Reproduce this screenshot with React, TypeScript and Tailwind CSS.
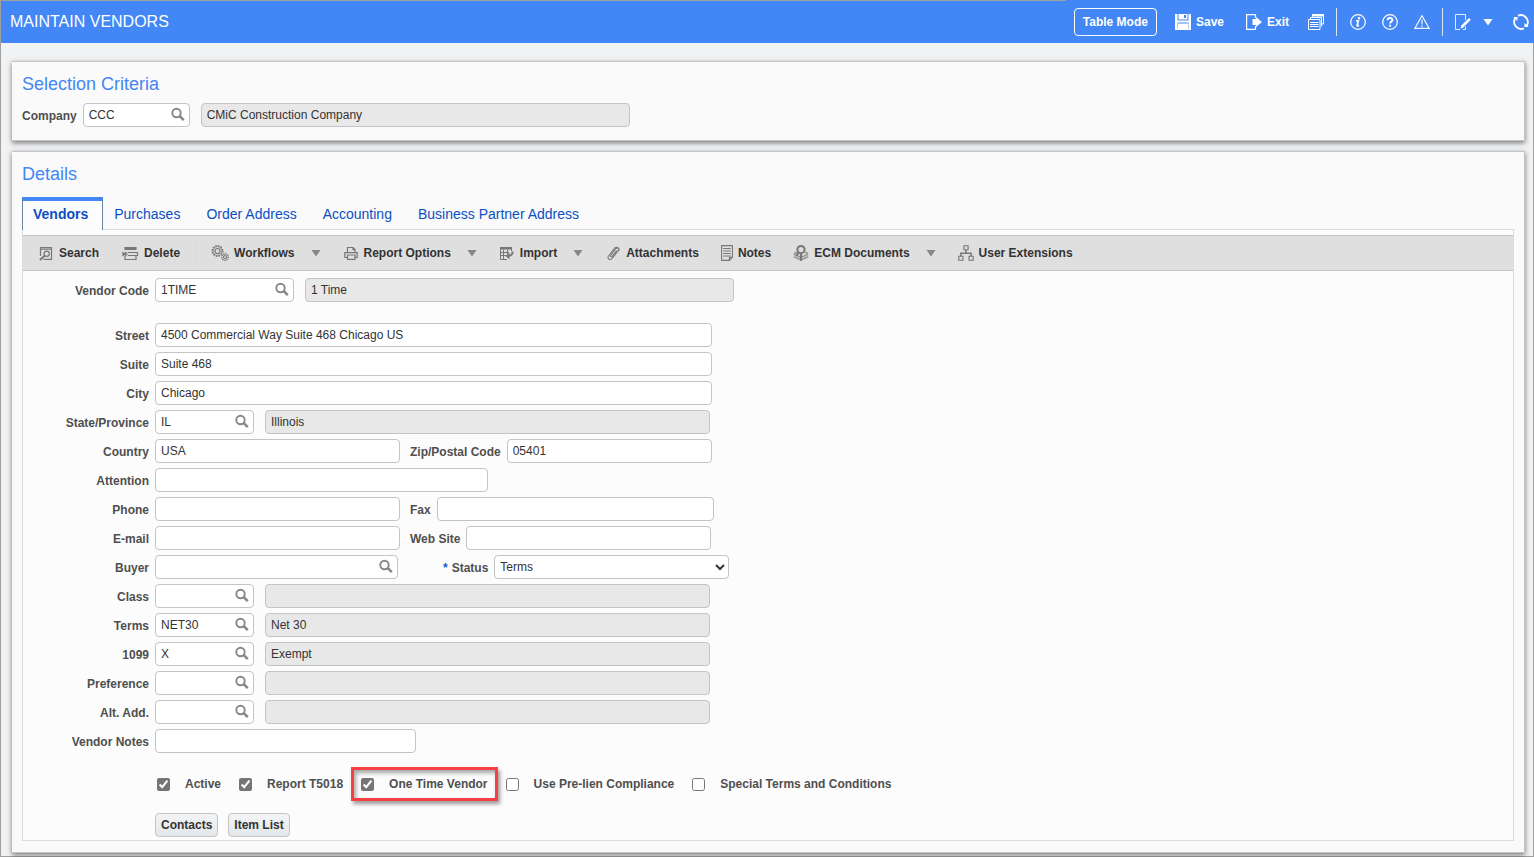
import React, { useId, type ReactNode } from 'react';

type IconProps = { w?: number; h?: number; children: ReactNode; sw?: number };

function Icon({ w = 16, h = 16, sw = 1.2, children }: IconProps) {
  return (
    <svg
      width={w}
      height={h}
      viewBox={`0 0 ${w} ${h}`}
      fill="none"
      stroke="currentColor"
      strokeWidth={sw}
      className="shrink-0"
      aria-hidden="true"
    >
      {children}
    </svg>
  );
}

const Caret = () => (
  <Icon w={10} h={8}>
    <path d="M.5 1h9L5 7.5z" fill="currentColor" stroke="none" />
  </Icon>
);

const SaveIcon = () => (
  <Icon>
    <path d="M0 0h2.500v6.500h11V0H16v16H0z" fill="currentColor" stroke="none" />
    <path d="M3.500 0h9v5.500h-9z" fill="currentColor" stroke="none" />
    <path d="M9 1h2v3H9z" fill="#4287f5" stroke="none" />
    <path d="M2.500 9h11" stroke="#4287f5" strokeWidth="1" />
    <path d="M2.500 9v6M13.500 9v6" stroke="#4287f5" strokeWidth=".4" />
  </Icon>
);

const ExitIcon = () => (
  <Icon>
    <path d="M9.500 4V.6H.6v14.800h8.900V12" />
    <path d="M6.500 5H10V3l6 5-6 5v-2H6.500z" fill="currentColor" stroke="none" />
  </Icon>
);

const FormsIcon = () => (
  <Icon sw={1}>
    <path d="M4.500 2.500V.5h11v9.500h-1.500" />
    <path d="M4 .5h12v2H4z" fill="currentColor" stroke="none" />
    <path d="M2.500 5V3.500h11v8.500h-1" />
    <path d="M.5 5.500h11.500v10H.5z" />
    <path d="M2 8.500h8.500M2 10.500h8.500M2 12.500h8.500" />
  </Icon>
);

const InfoIcon = () => (
  <Icon>
    <circle cx="8" cy="8" r="7.300" />
    <path d="M6 6.900h2.300L7.100 11.600h2" strokeWidth="1.700" />
    <circle cx="9" cy="4.200" r="1.200" fill="currentColor" stroke="none" />
  </Icon>
);

const HelpIcon = () => (
  <Icon>
    <circle cx="8" cy="8" r="7.300" />
    <path d="M5.600 6.300c0-3.100 4.900-3 4.900-.3 0 1.600-2.400 1.700-2.400 3.500" strokeWidth="1.900" />
    <path d="M7 10.700h2.100v1.900H7z" fill="currentColor" stroke="none" />
  </Icon>
);

const WarnIcon = () => (
  <Icon sw={1.1}>
    <path d="M8 1.700 15.200 14.400H.8z" />
    <path d="M8 5.500v5M8 11.500v1.500" />
  </Icon>
);

const EditIcon = () => (
  <Icon sw={1}>
    <path d="M10.500 6V.5H.5v15h4.500M10.500 12.500v3H8" strokeOpacity=".85" />
    <path d="m5.500 14.800.8-3.300L14 4l1.800 1.700-7.500 7.800z" fill="currentColor" stroke="none" />
  </Icon>
);

const RefreshIcon = () => (
  <Icon sw={1.8}>
    <path d="M5 1.700a7 7 0 0 1 8.600 10.300M11 14.300A7 7 0 0 1 2.400 4" />
    <path d="M.3 3h4.200v4zM15.700 13h-4.200V9z" fill="currentColor" stroke="none" />
  </Icon>
);

const SearchDocIcon = () => (
  <Icon>
    <path d="M2.500 11V2.500h11v11.900H5.500M2.500 4.200h11" />
    <circle cx="8.700" cy="8.700" r="2.600" />
    <path d="m6.700 10.800-4.900 4.200" strokeWidth="1.800" />
  </Icon>
);

const DeleteIcon = () => (
  <Icon w={18}>
    <path d="M4 2.500h11v2H4z" fill="currentColor" />
    <path d="M7 7.500h9.500v3H7M4 11v3.500h11v-3.500" />
    <path d="m1.500 7 4 4M5.500 7l-4 4M1 9h6" />
  </Icon>
);

const GearsIcon = () => (
  <Icon w={18}>
    <circle cx="6.500" cy="6" r="5.200" strokeDasharray="1.600 1.100" strokeWidth="1.500" />
    <circle cx="6.500" cy="6" r="4.400" strokeWidth=".8" />
    <circle cx="6.500" cy="6" r="2.500" />
    <circle cx="14" cy="12" r="3.300" strokeDasharray="1.400 .8" strokeWidth="1.400" />
    <circle cx="14" cy="12" r="1.500" />
  </Icon>
);

const PrinterIcon = () => (
  <Icon>
    <path d="M4.500 7V2.500h5.500l2 2V7M4 12.500H1.800V7.600h12.400v4.900H12" />
    <path d="M4.500 10h7.500v4.400H4.500zM10 2.500v2.200h2" />
  </Icon>
);

const ImportIcon = () => (
  <Icon>
    <path d="M1 2h12v2.500H1z" fill="currentColor" stroke="none" />
    <path d="M1.500 2v12.500H8M12.500 2v4M1 7.500h9M1 10.500h6M4.500 4.500v10M8.500 4.500v5" strokeWidth="1" />
    <path d="M13.500 6.500c.3 3-1.500 4-3.500 4.200" strokeWidth="2" />
    <path d="M10.500 7.700 6.500 11l4 3.300z" fill="currentColor" stroke="none" />
  </Icon>
);

const ClipIcon = () => (
  <Icon>
    <g transform="translate(1.500)">
      <path d="M4 10.500 9.300 3.600c1.300-1.700 3.800 0 2.600 1.700l-6.300 8.200c-2 2.300-5.300.1-3.700-2.300L7.700 3.500c1.700-2.600 6-.7 4.500 2.300M4.200 10.200c-.9 1.300.7 2.200 1.500 1.200l4.500-5.900" strokeWidth="1.100" />
    </g>
  </Icon>
);

const NotesIcon = () => (
  <Icon w={12} sw={1.1}>
    <path d="M.6.6h10.800v11.600l-3 3.200H.6zM8.400 15.200v-3h3" />
    <path d="M2.200 3.500h7.500M2.200 6h7.500M2.200 8.500h7.500M2.200 11h7.500" />
  </Icon>
);

const EcmIcon = () => (
  <Icon>
    <path d="m.8 9.200 7.200 3.300 7.200-3.300M.8 11.700 8 15l7.200-3.300M1 8.500 4 7.300M15 8.500l-3-1.200" strokeWidth="1.500" strokeOpacity=".7" />
    <path d="M8 9v6.800" strokeWidth="2.200" />
    <circle cx="8" cy="4.600" r="3.600" strokeWidth="2" />
    <path d="M5.500 7.500 3.500 11" strokeWidth="2" />
  </Icon>
);

const OrgIcon = () => (
  <Icon sw={1.1}>
    <path d="M5.900.8h4.200v3.900H5.900zM.8 11.300h4.200v3.900H.8zM11 11.300h4.200v3.900H11z" />
    <path d="M8 4.700v3.500M2.900 11.300V8.200h10.200v3.100" strokeWidth="1.500" />
  </Icon>
);

function HeaderButton({ label, text, children }: { label: string; text?: string; children: ReactNode }) {
  return (
    <button type="button" aria-label={label} className="flex h-7 items-center gap-[5px] text-xs font-bold">
      {children}
      {text}
    </button>
  );
}

function ToolItem({ icon, text, menu }: { icon: ReactNode; text: string; menu?: boolean }) {
  return (
    <div className="flex items-center gap-4">
      <button type="button" className="flex items-center gap-[5px] text-xs font-bold text-[#333]">
        <span className="text-[#777]">{icon}</span>
        {text}
      </button>
      {menu && (
        <button type="button" aria-label={`${text} menu`} className="text-[#84888c]">
          <Caret />
        </button>
      )}
    </div>
  );
}

const fieldClass =
  'h-6 w-full rounded-[4px] border border-[#c4c4c4] bg-white px-[5px] text-xs text-[#333] outline-none focus:border-[#4287f5]';

function Field({
  id,
  width,
  value = '',
  lookup,
}: {
  id?: string;
  width: string;
  value?: string;
  lookup?: boolean;
}) {
  return (
    <div className={`relative flex ${width}`}>
      <input id={id} defaultValue={value} className={fieldClass} />
      {lookup && (
        <button type="button" aria-label="Look up" className="absolute top-1 right-1 text-[#84888c]">
          <Icon>
            <circle cx="6.500" cy="6" r="4.200" strokeWidth="1.900" />
            <path d="m9.600 9 4.200 4.200" strokeWidth="2.500" />
          </Icon>
        </button>
      )}
    </div>
  );
}

function Description({ width, value = '', label }: { width: string; value?: string; label: string }) {
  return (
    <input
      readOnly
      aria-label={label}
      value={value}
      className={`ml-[11px] h-6 rounded-[4px] border border-[#c4c4c4] bg-[#e8e8e8] px-[5px] text-xs text-[#333] outline-none ${width}`}
    />
  );
}

const captionClass = 'text-xs font-bold text-[#4f4f4f] whitespace-nowrap';
const labelClass = `${captionClass} pt-0.5`;

function Row({
  label,
  width,
  value,
  lookup,
  children,
}: {
  label: string;
  width: string;
  value?: string;
  lookup?: boolean;
  children?: ReactNode;
}) {
  const id = useId();
  return (
    <div className="flex items-center">
      <label htmlFor={id} className={`${labelClass} mr-1.5 w-[126px] text-right`}>
        {label}
      </label>
      <Field id={id} width={width} value={value} lookup={lookup} />
      {children}
    </div>
  );
}

function SideField({ label, width, value }: { label: string; width: string; value?: string }) {
  const id = useId();
  return (
    <>
      <label htmlFor={id} className={`${labelClass} mr-1.5 ml-2.5`}>
        {label}
      </label>
      <Field id={id} width={width} value={value} />
    </>
  );
}

function Check({ label, checked, highlight }: { label: string; checked?: boolean; highlight?: boolean }) {
  return (
    <label className={`relative flex h-5 items-center gap-[15px] ${captionClass}`}>
      <input type="checkbox" defaultChecked={checked} className="size-[13px] accent-[#757575]" />
      {label}
      {highlight && (
        <span className="pointer-events-none absolute -inset-x-2.5 -inset-y-[7px] border-3 border-[#f93f43] shadow-[2px_3px_4px_rgba(0,0,0,0.4),inset_2px_3px_4px_rgba(0,0,0,0.35)]" />
      )}
    </label>
  );
}

const panelClass =
  'mr-2 ml-[11px] border-y border-r border-[#c4c4c4] bg-[#fafafa] px-2.5 pt-2.5 shadow-[0_2px_5px_rgba(0,0,0,0.5)]';

const smallButton =
  'h-6 rounded-[4px] border border-[#c4c4c4] bg-linear-to-b from-[#f3f4f5] to-[#e3e7ea] px-[5px] text-xs font-bold text-[#333]';

export default function App() {
  return (
    <div className="flex min-h-screen flex-col border border-[#a0a0a0] bg-[#f1f2f4] font-['Liberation_Sans',Arial,sans-serif]">
      <header className="-mr-px flex h-[42px] items-center bg-[#4287f5] pl-[9px] text-white">
        <h1 className="text-base">MAINTAIN VENDORS</h1>
        <div className="-mt-px ml-auto flex h-[43px] items-center bg-[#4287f5] pr-[5px] pl-2">
          <button type="button" className="mr-[18px] h-7 rounded-[4px] border border-white px-2 text-xs font-bold">
            Table Mode
          </button>
          <div className="flex items-center gap-[22px]">
            <HeaderButton label="Save" text="Save"><SaveIcon /></HeaderButton>
            <HeaderButton label="Exit" text="Exit"><ExitIcon /></HeaderButton>
          </div>
          <div className="ml-[19px] border-r border-white/80 pr-3">
            <HeaderButton label="Forms"><FormsIcon /></HeaderButton>
          </div>
          <div className="flex gap-4 border-r border-white/80 px-3 pl-[13px]">
            <HeaderButton label="Information"><InfoIcon /></HeaderButton>
            <HeaderButton label="Help"><HelpIcon /></HeaderButton>
            <HeaderButton label="Warnings"><WarnIcon /></HeaderButton>
          </div>
          <div className="ml-3 flex items-center">
            <HeaderButton label="Edit"><EditIcon /></HeaderButton>
            <button type="button" aria-label="Edit menu" className="mr-5 ml-3"><Caret /></button>
            <HeaderButton label="Refresh"><RefreshIcon /></HeaderButton>
          </div>
        </div>
      </header>

      <main className="flex flex-col gap-2.5 pt-[18px] pb-[3px]">
        <section className={`${panelClass} pb-[13px]`}>
          <h2 className="text-lg leading-6 text-[#4287f5]">Selection Criteria</h2>
          <div className="mt-[7px] flex items-center">
            <label htmlFor="company" className={`${labelClass} mr-1.5`}>Company</label>
            <Field id="company" width="w-[107px]" value="CCC" lookup />
            <Description label="Company name" width="w-[429px]" value="CMiC Construction Company" />
          </div>
        </section>

        <section className={`${panelClass} pb-[11px]`}>
          <h2 className="text-lg leading-6 text-[#4287f5]">Details</h2>
          <nav className="relative mt-[11px] -mb-px flex h-[33px] text-sm text-[#0b4fc4]">
            <a href="#vendors" className="flex items-center border-x border-t-4 border-x-[#6485a3] border-t-[#4287f5] bg-[#fcfcfc] pr-3.5 pb-1 pl-2.5 font-bold">
              Vendors
            </a>
            <div className="ml-[11px] flex items-center gap-[26px]">
              <a href="#purchases">Purchases</a>
              <a href="#order-address">Order Address</a>
              <a href="#accounting">Accounting</a>
              <a href="#partner">Business Partner Address</a>
            </div>
          </nav>
          <div className="border border-[#d5dde4] bg-[#fcfcfc] pt-[5px]">
            <div className="flex h-9 items-center gap-[22px] border-y border-[#c4c4c4] bg-[#dfdfdf] pl-[15px]">
              <ToolItem icon={<SearchDocIcon />} text="Search" />
              <div className="flex items-center gap-[15px]">
                <ToolItem icon={<DeleteIcon />} text="Delete" />
                <span className="h-7 w-px bg-[#d9dde0]" />
                <ToolItem icon={<GearsIcon />} text="Workflows" menu />
              </div>
              <ToolItem icon={<PrinterIcon />} text="Report Options" menu />
              <ToolItem icon={<ImportIcon />} text="Import" menu />
              <ToolItem icon={<ClipIcon />} text="Attachments" />
              <ToolItem icon={<NotesIcon />} text="Notes" />
              <ToolItem icon={<EcmIcon />} text="ECM Documents" menu />
              <ToolItem icon={<OrgIcon />} text="User Extensions" />
            </div>

            <form className="pt-[7px] pb-[3px]">
              <Row label="Vendor Code" width="w-[139px]" value="1TIME" lookup>
                <Description label="Vendor name" width="w-[429px]" value="1 Time" />
              </Row>
              <div className="mt-[21px] flex flex-col gap-[5px]">
                <Row label="Street" width="w-[557px]" value="4500 Commercial Way Suite 468 Chicago US" />
                <Row label="Suite" width="w-[557px]" value="Suite 468" />
                <Row label="City" width="w-[557px]" value="Chicago" />
                <Row label="State/Province" width="w-[99px]" value="IL" lookup>
                  <Description label="State name" width="w-[445px]" value="Illinois" />
                </Row>
                <Row label="Country" width="w-[245px]" value="USA">
                  <SideField label="Zip/Postal Code" width="w-[205px]" value="05401" />
                </Row>
                <Row label="Attention" width="w-[333px]" />
                <Row label="Phone" width="w-[245px]">
                  <SideField label="Fax" width="w-[277px]" />
                </Row>
                <Row label="E-mail" width="w-[245px]">
                  <SideField label="Web Site" width="w-[245px]" />
                </Row>
                <Row label="Buyer" width="w-[243px]" lookup>
                  <label htmlFor="status" className={`${labelClass} mr-1.5 ml-[45px]`}>
                    <span className="mr-1 text-[#0b5fd0]">*</span>Status
                  </label>
                  <select
                    id="status"
                    className="h-6 w-[235px] rounded-[4px] border border-[#c4c4c4] bg-white px-px text-xs text-[#333]"
                  >
                    <option>Terms</option>
                  </select>
                </Row>
                <Row label="Class" width="w-[99px]" lookup>
                  <Description label="Class name" width="w-[445px]" />
                </Row>
                <Row label="Terms" width="w-[99px]" value="NET30" lookup>
                  <Description label="Terms name" width="w-[445px]" value="Net 30" />
                </Row>
                <Row label="1099" width="w-[99px]" value="X" lookup>
                  <Description label="1099 name" width="w-[445px]" value="Exempt" />
                </Row>
                <Row label="Preference" width="w-[99px]" lookup>
                  <Description label="Preference name" width="w-[445px]" />
                </Row>
                <Row label="Alt. Add." width="w-[99px]" lookup>
                  <Description label="Alternate address name" width="w-[445px]" />
                </Row>
                <Row label="Vendor Notes" width="w-[261px]" />
              </div>

              <div className="mt-[21px] flex gap-[18px] pl-[134px]">
                <Check label="Active" checked />
                <Check label="Report T5018" checked />
                <Check label="One Time Vendor" checked highlight />
                <Check label="Use Pre-lien Compliance" />
                <Check label="Special Terms and Conditions" />
              </div>

              <div className="mt-[19px] flex gap-2.5 pl-[132px]">
                <button type="button" className={smallButton}>Contacts</button>
                <button type="button" className={smallButton}>Item List</button>
              </div>
            </form>
          </div>
        </section>
      </main>
    </div>
  );
}
